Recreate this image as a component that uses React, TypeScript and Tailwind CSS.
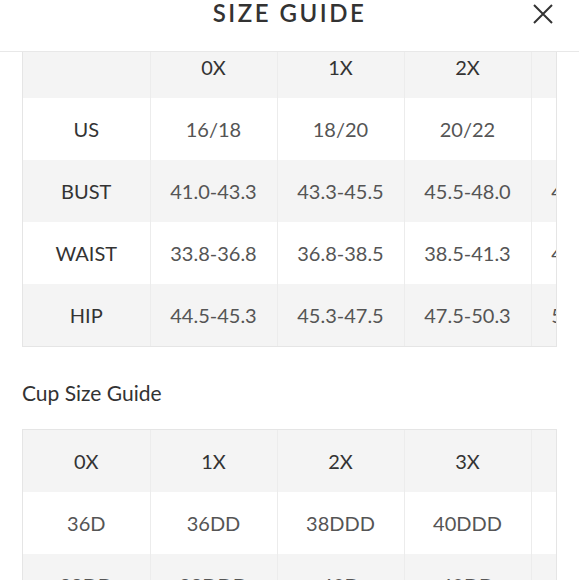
const sizeRows = [
  { label: "", values: ["0X", "1X", "2X", "3X"], head: true },
  { label: "US", values: ["16/18", "18/20", "20/22", "22/24"] },
  { label: "BUST", values: ["41.0-43.3", "43.3-45.5", "45.5-48.0", "48.0-50.5"] },
  { label: "WAIST", values: ["33.8-36.8", "36.8-38.5", "38.5-41.3", "41.3-44.0"] },
  { label: "HIP", values: ["44.5-45.3", "45.3-47.5", "47.5-50.3", "50.3-53.0"] },
];

const cupRows = [
  { values: ["0X", "1X", "2X", "3X", "4X"], head: true },
  { values: ["36D", "36DD", "38DDD", "40DDD", "42DDD"] },
  { values: ["38DD", "38DDD", "40D", "40DD", "42DD"] },
];

const rowBg = (i: number) => (i % 2 === 0 ? "bg-[#f4f4f4]" : "bg-white");

const Cell = ({ text, dark }: { text: string; dark?: boolean }) => (
  <td
    className={`h-[62px] w-[127px] min-w-[127px] border-r border-[#ececec] text-center text-[20px] ${
      dark ? "text-[#333]" : "text-[#555]"
    }`}
  >
    {text}
  </td>
);

const App = () => {
  return (
    <div
      className="w-[579px] h-[580px] overflow-hidden bg-white flex flex-col"
      style={{ fontFamily: "Lato, 'Open Sans', sans-serif" }}
    >
      <header className="relative h-[52px] shrink-0 border-b border-[#e8e8e8] flex justify-center bg-white z-10">
        <h1 className="text-[24px] leading-[26px] font-semibold tracking-[2.5px] text-[#333]">
          SIZE GUIDE
        </h1>
        <button className="absolute right-[26px] top-[4px] text-[#333]">
          <svg width="20" height="20" viewBox="0 0 20 20" fill="none" stroke="currentColor" strokeWidth="2">
            <path d="M1 1 L19 19 M19 1 L1 19" />
          </svg>
        </button>
      </header>

      <div className="flex-1 overflow-hidden">
        <div className="-mt-[17px] px-[22px]">
          <div className="w-[535px] overflow-hidden border border-[#e5e5e5]">
            <table className="border-collapse table-fixed">
              <tbody>
                {sizeRows.map((row, i) => (
                  <tr key={i} className={rowBg(i)}>
                    <Cell text={row.label} dark />
                    {row.values.map((v) => (
                      <Cell key={v} text={v} dark={row.head} />
                    ))}
                  </tr>
                ))}
              </tbody>
            </table>
          </div>

          <h2 className="mt-[32px] mb-[23px] text-[21px] leading-[27px] text-[#333]">Cup Size Guide</h2>

          <div className="w-[535px] overflow-hidden border border-[#e5e5e5]">
            <table className="border-collapse table-fixed">
              <tbody>
                {cupRows.map((row, i) => (
                  <tr key={i} className={rowBg(i)}>
                    {row.values.map((v) => (
                      <Cell key={v} text={v} dark={row.head} />
                    ))}
                  </tr>
                ))}
              </tbody>
            </table>
          </div>
        </div>
      </div>
    </div>
  );
};

export default App;
